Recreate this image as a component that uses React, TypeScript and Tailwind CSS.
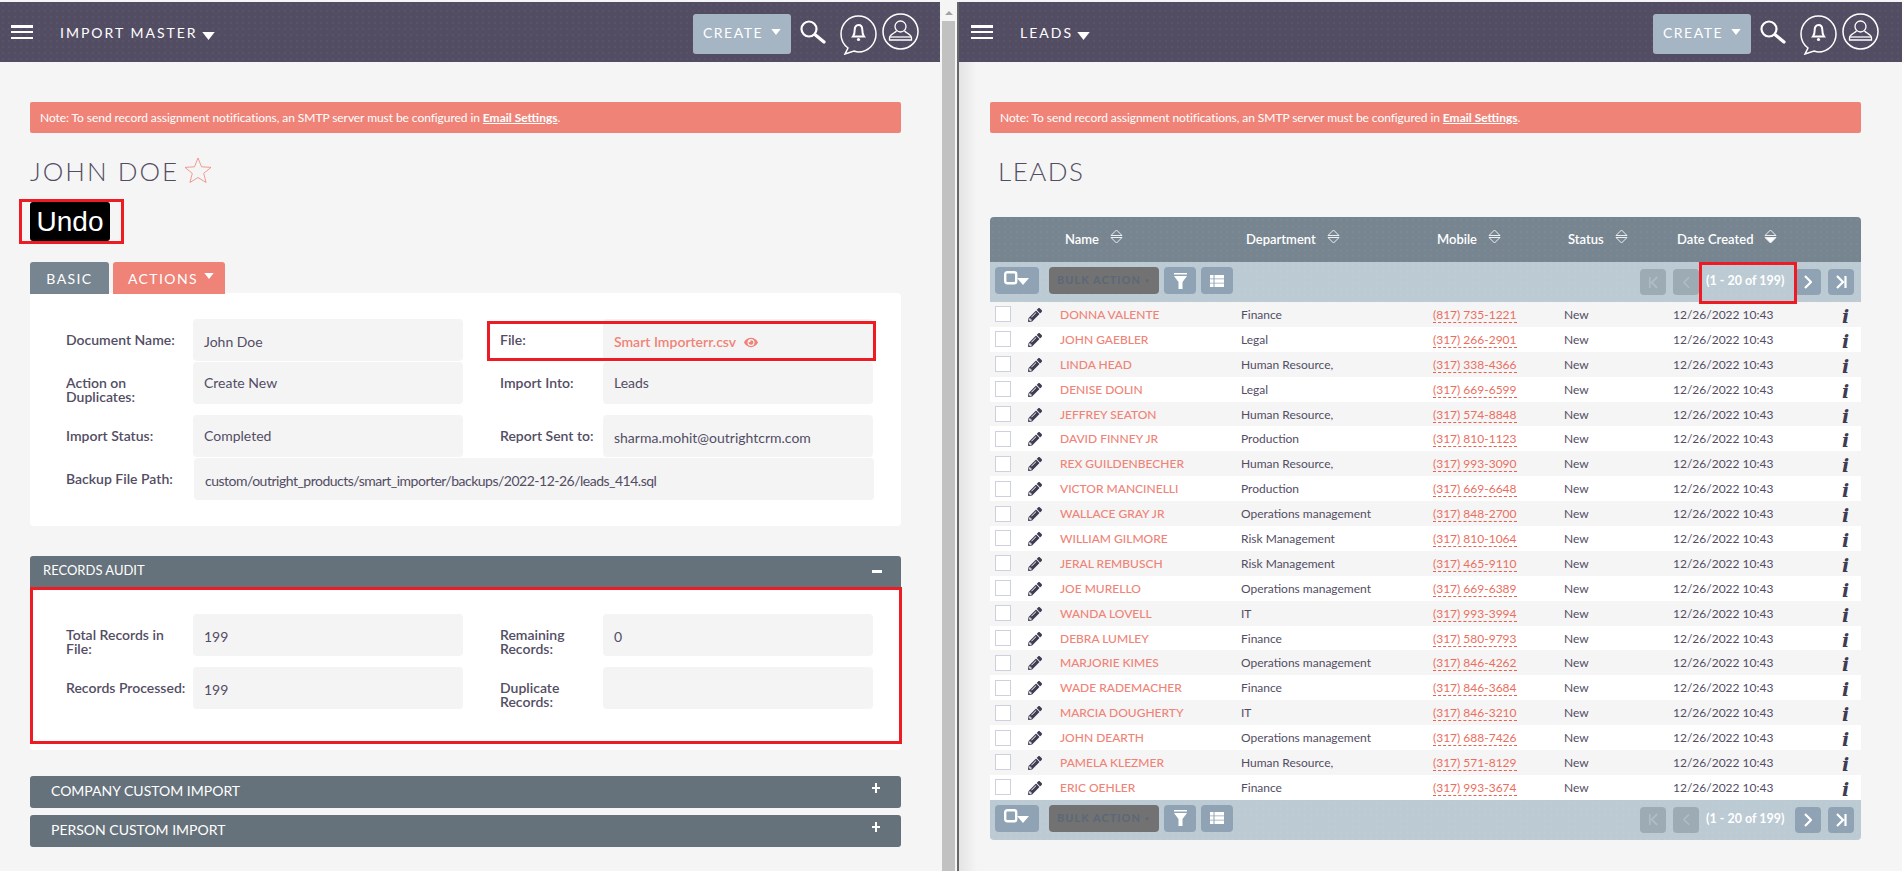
import { FaPencilAlt, FaEye } from 'react-icons/fa'

const dots = 'bg-[radial-gradient(rgba(255,255,255,0.035)_1px,transparent_1px)] bg-[length:6px_6px]'

const leads = [
  ['DONNA VALENTE', 'Finance', '(817) 735-1221'],
  ['JOHN GAEBLER', 'Legal', '(317) 266-2901'],
  ['LINDA HEAD', 'Human Resource,', '(317) 338-4366'],
  ['DENISE DOLIN', 'Legal', '(317) 669-6599'],
  ['JEFFREY SEATON', 'Human Resource,', '(317) 574-8848'],
  ['DAVID FINNEY JR', 'Production', '(317) 810-1123'],
  ['REX GUILDENBECHER', 'Human Resource,', '(317) 993-3090'],
  ['VICTOR MANCINELLI', 'Production', '(317) 669-6648'],
  ['WALLACE GRAY JR', 'Operations management', '(317) 848-2700'],
  ['WILLIAM GILMORE', 'Risk Management', '(317) 810-1064'],
  ['JERAL REMBUSCH', 'Risk Management', '(317) 465-9110'],
  ['JOE MURELLO', 'Operations management', '(317) 669-6389'],
  ['WANDA LOVELL', 'IT', '(317) 993-3994'],
  ['DEBRA LUMLEY', 'Finance', '(317) 580-9793'],
  ['MARJORIE KIMES', 'Operations management', '(317) 846-4262'],
  ['WADE RADEMACHER', 'Finance', '(317) 846-3684'],
  ['MARCIA DOUGHERTY', 'IT', '(317) 846-3210'],
  ['JOHN DEARTH', 'Operations management', '(317) 688-7426'],
  ['PAMELA KLEZMER', 'Human Resource,', '(317) 571-8129'],
  ['ERIC OEHLER', 'Finance', '(317) 993-3674'],
]

const gridCols = 'grid grid-cols-[38px_32px_181px_192px_131px_109px_157px_30px]'

function Caret({ className }: { className: string }) {
  return (
    <svg viewBox="0 0 14 9" className={className} fill="#fff">
      <path d="M0 0h14L7 9z" />
    </svg>
  )
}

function TopBar({ title, pad }: { title: string; pad: string }) {
  return (
    <div className={`flex h-[60px] shrink-0 items-start bg-[#534d64] ${dots} ${pad}`}>
      <div className="mt-[23px] flex w-[22px] flex-col gap-[3.3px]">
        <span className="h-[2.5px] bg-white" />
        <span className="h-[2.5px] bg-white" />
        <span className="h-[2.5px] bg-white" />
      </div>
      <span className="ml-[27px] mt-[22px] text-[14px] leading-[18px] tracking-[2px] text-white">{title}</span>
      <Caret className="ml-[3px] mt-[30px] h-[8px] w-[15px]" />
      <div className="ml-auto mt-[12px] flex h-[40px] w-[98px] items-center rounded-[3px] bg-[#a5b5c3] pb-[3px] pl-[10px]">
        <span className="text-[14px] tracking-[1.5px] text-white">CREATE</span>
        <Caret className="mb-[2px] ml-[8px] h-[6px] w-[10px]" />
      </div>
      <svg viewBox="0 0 26 24" className="ml-[9px] mt-[18px] h-[24px] w-[26px]" fill="none" stroke="#fff">
        <circle cx="9" cy="9" r="7.5" strokeWidth="2.2" />
        <path d="M15.500 15l8.500 7" strokeWidth="3.2" strokeLinecap="round" />
      </svg>
      <svg viewBox="0 0 37 40" className="ml-[14px] mt-[13px] h-[40px] w-[37px]" fill="none" stroke="#fff" strokeWidth="1.5">
        <path d="M18.500 1C9 1 1 9 1 19c0 6 3 11 7 14l-3 6 9-3c1.500.500 3 1 4.500 1C28 37 36 29 36 19S28 1 18.500 1z" />
        <path d="M18.500 10c-2.500 0-3.800 2-3.800 4.800 0 3-.5 5.200-1.700 6.700h11c-1.200-1.500-1.700-3.700-1.700-6.700 0-2.800-1.300-4.800-3.800-4.800z" strokeWidth="2" />
        <circle cx="18.500" cy="24.500" r="1.600" fill="#fff" stroke="none" />
      </svg>
      <svg viewBox="0 0 37 37" className="ml-[5px] mt-[11px] h-[37px] w-[37px]" fill="none" stroke="#fff" strokeWidth="1.300">
        <circle cx="18.500" cy="18.500" r="17.500" strokeWidth="1.500" />
        <circle cx="18.500" cy="13.500" r="5.500" />
        <path d="M14.500 18c-2 2-6.500 3.500-7 6.500V27h22v-2.500c-.5-3-5-4.500-7-6.500" />
        <path d="M8 24h21" />
      </svg>
    </div>
  )
}

function Alert() {
  return (
    <div className="flex h-[31px] items-center rounded-[2px] bg-[#f08377] pl-[10px] text-[12px] text-white">
      <span className="tracking-[-0.07px]">
        Note: To send record assignment notifications, an SMTP server must be configured in{' '}
        <span className="font-bold tracking-normal underline">Email Settings</span>.
      </span>
    </div>
  )
}

function Field({ label, value, wide, low, link }: { label: string; value?: string; wide?: boolean; low?: boolean; link?: boolean }) {
  return (
    <div className="flex">
      <div className={`pr-[5px] pt-[14px] text-[14px] font-semibold leading-[14px] text-[#534d64] ${wide ? 'w-[128px]' : 'w-[127px]'}`}>{label}</div>
      <div className={`h-[42px] rounded-[4px] bg-[#f4f4f4] pl-[11px] text-[14px] leading-[14px] text-[#534d64] ${low ? 'pt-[16px]' : 'pt-[14px]'} ${wide ? 'w-[680px] tracking-[-0.5px]' : 'w-[270px]'}`}>
        {link ? (
          <span className="flex items-center gap-[8px] font-semibold text-[#f08377]">
            {value}
            <FaEye className="h-[13px] w-[14px]" />
          </span>
        ) : (
          value
        )}
      </div>
    </div>
  )
}

function FieldRow({ children, spaced }: { children: React.ReactNode; spaced?: boolean }) {
  return <div className={`flex gap-[37px] ${spaced ? 'mt-[11px]' : 'mt-px'}`}>{children}</div>
}

function RightField(props: { label: string; value?: string; low?: boolean; link?: boolean }) {
  return (
    <div className="[&>div>div:first-child]:w-[103px] [&>div>div:first-child]:pr-0">
      <Field {...props} />
    </div>
  )
}

function RedBox({ className }: { className: string }) {
  return <div className={`pointer-events-none absolute border-[3px] border-[#ed1c24] ${className}`} />
}

function ImportPane() {
  return (
    <div className="flex w-[940px] shrink-0 flex-col bg-[#f5f5f5]">
      <TopBar title="IMPORT MASTER" pad="pl-[11px] pr-[21px]" />
      <div className="ml-[30px] w-[871px] pt-[40px]">
        <Alert />
        <div className="mt-[25px] flex h-[24px] items-center">
          <h1 className="mt-px text-[26px] font-light leading-[24px] tracking-[2px] text-[#534d64]">JOHN DOE</h1>
          <svg viewBox="0 0 28 26" className="ml-[5px] h-[26px] w-[28px]" fill="none" stroke="#f08377" strokeWidth="0.8">
            <path d="M14 1l3.500 8.800 9.500.6-7.300 6 2.400 9.100-8.100-5-8.100 5 2.400-9.100-7.300-6 9.500-.6z" />
          </svg>
        </div>
        <div className="relative mt-[20px] flex h-[39px] w-[80px] items-center justify-center rounded-[3px] bg-black font-['Liberation_Sans',sans-serif] text-[28px] text-white">
          Undo
          <RedBox className="-left-[11px] -right-[14px] -top-[3px] -bottom-[3px]" />
        </div>
        <div className="relative z-10 mt-[21px] flex h-[32px] gap-[4px] text-[14px] tracking-[1.4px] text-white">
          <div className="flex w-[79px] items-center justify-center rounded-t-[3px] bg-[#778591]">BASIC</div>
          <div className="flex w-[112px] items-center rounded-t-[3px] bg-[#f08377] pl-[15px]">
            ACTIONS
            <Caret className="mb-[4px] ml-[6px] h-[6px] w-[10px]" />
          </div>
        </div>
        <div className="relative -mt-px h-[233px] rounded-[4px] bg-white pl-[36px] pt-[25px]">
          <FieldRow>
            <Field label="Document Name:" value="John Doe" low />
            <RightField label="File:" value="Smart Importerr.csv" link low />
          </FieldRow>
          <FieldRow>
            <Field label="Action on Duplicates:" value="Create New" />
            <RightField label="Import Into:" value="Leads" />
          </FieldRow>
          <FieldRow spaced>
            <Field label="Import Status:" value="Completed" />
            <RightField label="Report Sent to:" value="sharma.mohit@outrightcrm.com" low />
          </FieldRow>
          <FieldRow>
            <Field wide label="Backup File Path:" value="custom/outright_products/smart_importer/backups/2022-12-26/leads_414.sql" low />
          </FieldRow>
          <RedBox className="left-[457px] top-[28px] h-[40px] w-[389px]" />
        </div>
        <div className="mt-[30px] flex h-[31px] items-center justify-between rounded-t-[3px] bg-[#66727b] pb-px pl-[13px] pr-[19px] text-[13px] text-white">
          RECORDS AUDIT
          <span className="h-[3px] w-[10px] bg-white" />
        </div>
        <div className="relative h-[163px] rounded-b-[4px] bg-white pl-[36px] pt-[26px]">
          <FieldRow>
            <Field label="Total Records in File:" value="199" low />
            <RightField label="Remaining Records:" value="0" low />
          </FieldRow>
          <FieldRow spaced>
            <Field label="Records Processed:" value="199" low />
            <RightField label="Duplicate Records:" />
          </FieldRow>
          <RedBox className="left-0 top-0 h-[157px] w-[872px]" />
        </div>
        {['COMPANY CUSTOM IMPORT', 'PERSON CUSTOM IMPORT'].map((t, i) => (
          <div key={t} className={`flex h-[32px] items-center justify-between rounded-[3px] bg-[#66727b] pb-[3px] pl-[21px] pr-[21px] text-[14px] text-white ${i === 0 ? 'mt-[26px]' : 'mt-[7px]'}`}>
            {t}
            <svg viewBox="0 0 8 10" className="mb-[5px] h-[10px] w-[8px]" fill="#fff">
              <path d="M3 0h2v4h3v2H5v4H3V6H0V4h3z" />
            </svg>
          </div>
        ))}
      </div>
    </div>
  )
}

function Scrollbar() {
  return (
    <div className="flex w-[17px] shrink-0 flex-col items-center bg-[#f5f5f5] px-[2px]">
      <svg viewBox="0 0 8 4" className="mt-[9px] h-[4px] w-[8px]" fill="#a3a3a3">
        <path d="M4 0l4 4H0z" />
      </svg>
      <div className="mt-[6px] w-full flex-1 bg-[#c1c1c1]" />
    </div>
  )
}

function SortIcon({ active }: { active?: boolean }) {
  return (
    <svg viewBox="0 0 13 15" className="mb-[6px] ml-[11px] h-[15px] w-[13px]" fill="none" stroke="#eef1f4" strokeWidth="1">
      <path d="M6.500 1L1 6.500h11z" />
      <path d="M1 8.500h11L6.500 14z" fill={active ? '#fff' : 'none'} />
    </svg>
  )
}

function Btn({ className, children }: { className: string; children?: React.ReactNode }) {
  return <div className={`flex items-center justify-center rounded-[4px] ${className}`}>{children}</div>
}

function Pager() {
  return (
    <div className="ml-auto mr-[7px] mt-[2px] flex items-start">
      <Btn className="h-[26px] w-[26px] bg-[#9dabb5]">
        <svg viewBox="0 0 12 14" className="h-[13px] w-[11px]" fill="none" stroke="#aebcc6" strokeWidth="2"><path d="M2 1v12M10 1L4 7l6 6" /></svg>
      </Btn>
      <Btn className="ml-[7px] h-[26px] w-[26px] bg-[#9dabb5]">
        <svg viewBox="0 0 8 14" className="h-[13px] w-[7px]" fill="none" stroke="#aebcc6" strokeWidth="2"><path d="M7 1L1 7l6 6" /></svg>
      </Btn>
      <span className="ml-[7px] w-[89px] text-[12.5px] font-bold leading-[24px] text-white">(1 - 20 of 199)</span>
      <Btn className="h-[26px] w-[26px] bg-[#8fa3b5]">
        <svg viewBox="0 0 8 14" className="h-[14px] w-[8px]" fill="none" stroke="#fff" strokeWidth="2.200"><path d="M1 1l6 6-6 6" /></svg>
      </Btn>
      <Btn className="ml-[7px] h-[26px] w-[26px] bg-[#8fa3b5]">
        <svg viewBox="0 0 12 14" className="h-[14px] w-[12px]" fill="none" stroke="#fff" strokeWidth="2.200"><path d="M2 1l6 6-6 6M10.500 1v12" /></svg>
      </Btn>
    </div>
  )
}

function ActionBar({ bottom }: { bottom?: boolean }) {
  return (
    <div className={`relative flex h-[40px] bg-[#bccad3] pt-[5px] ${dots} ${bottom ? 'rounded-b-[4px]' : ''}`}>
      <Btn className="ml-[5px] h-[27px] w-[44px] items-start bg-[#8fa3b5] pt-[4px]">
        <svg viewBox="0 0 26 15" className="h-[15px] w-[26px]" fill="#fff">
          <rect x="1.200" y="1.200" width="11" height="11" rx="2" fill="none" stroke="#fff" strokeWidth="2.400" />
          <path d="M13 7h12l-6 7z" />
        </svg>
      </Btn>
      <Btn className="ml-[10px] h-[27px] w-[110px] bg-[#727272] text-[11px] font-bold tracking-[1px] text-[#5a6878]">
        BULK ACTION<span className="ml-[3px] text-[6px]">▼</span>
      </Btn>
      <Btn className="ml-[5px] h-[27px] w-[32px] bg-[#8fa3b5]">
        <svg viewBox="0 0 13 16" className="h-[16px] w-[13px]" fill="#fff"><path d="M0 0h13v1.500H0zM0 3h13L8.500 9v7h-4V9z" /></svg>
      </Btn>
      <Btn className="ml-[5px] h-[27px] w-[32px] bg-[#8fa3b5]">
        <svg viewBox="0 0 14 12" className="h-[12px] w-[14px]" fill="#fff"><path d="M0 0h3.500v3.500H0zM4.500 0H14v3.500H4.500zM0 4.300h3.500v3.500H0zM4.500 4.300H14v3.500H4.500zM0 8.500h3.500V12H0zM4.500 8.500H14V12H4.500z" /></svg>
      </Btn>
      <Pager />
      {!bottom && <RedBox className="right-[64px] top-0 h-[42px] w-[98px]" />}
    </div>
  )
}

function LeadsTable() {
  const heads = ['Name', 'Department', 'Mobile', 'Status', 'Date Created']
  return (
    <div className="mt-[35px]">
      <div className={`${gridCols} h-[45px] items-center rounded-t-[4px] bg-[#778591] ${dots} text-[13px] font-semibold text-white`}>
        <span />
        <span />
        {heads.map((h, i) => (
          <div key={h} className={`flex items-center ${i < 2 ? 'pl-[5px]' : 'pl-[4px]'}`}>
            {h}
            <SortIcon active={h === 'Date Created'} />
          </div>
        ))}
      </div>
      <ActionBar />
      {leads.map(([name, dept, phone], i) => (
        <div key={name} className={`${gridCols} h-[24.9px] items-center pt-px text-[12px] text-[#534d64] ${i % 2 === 0 ? 'bg-[#f5f5f5]' : 'bg-white'}`}>
          <div className="-mt-px pl-[5px]">
            <div className="h-[16px] w-[16px] border border-[#ccd2dc] bg-white" />
          </div>
          <FaPencilAlt className="h-[14px] w-[14px] text-[#3f3b52]" />
          <span className="font-medium text-[#f08377]">{name}</span>
          <span>{dept}</span>
          <span>
            <span className="border-b border-dashed border-[#e8604f] text-[#ea6f60]">{phone}</span>
          </span>
          <span>New</span>
          <span>12/26/2022 10:43</span>
          <span className="pl-[12px] pt-[2px] font-['DejaVu_Serif',serif] text-[19px] font-bold italic leading-[20px] text-[#3f3b52]">i</span>
        </div>
      ))}
      <ActionBar bottom />
    </div>
  )
}

function LeadsPane() {
  return (
    <div className="relative flex min-w-0 flex-1 flex-col bg-[linear-gradient(to_right,#e4e4e4,#f5f5f5_18px)]">
      <TopBar title="LEADS" pad="pl-[12px] pr-[23px]" />
      <div className="ml-[31px] w-[871px] pt-[40px]">
        <Alert />
        <h1 className="mt-[26px] h-[23px] pl-[8px] text-[26px] font-light leading-[24px] tracking-[1.5px] text-[#534d64]">LEADS</h1>
        <LeadsTable />
      </div>
    </div>
  )
}

export default function App() {
  return (
    <div className="flex h-[871px] w-[1902px] flex-col overflow-hidden bg-[#f5f5f5] font-['Lato',sans-serif]">
      <div className="h-[2px] shrink-0 bg-[#f5f5f5]" />
      <div className="flex min-h-0 flex-1">
        <ImportPane />
        <Scrollbar />
        <div className="w-[2px] shrink-0 bg-[#666666]" />
        <LeadsPane />
      </div>
    </div>
  )
}
